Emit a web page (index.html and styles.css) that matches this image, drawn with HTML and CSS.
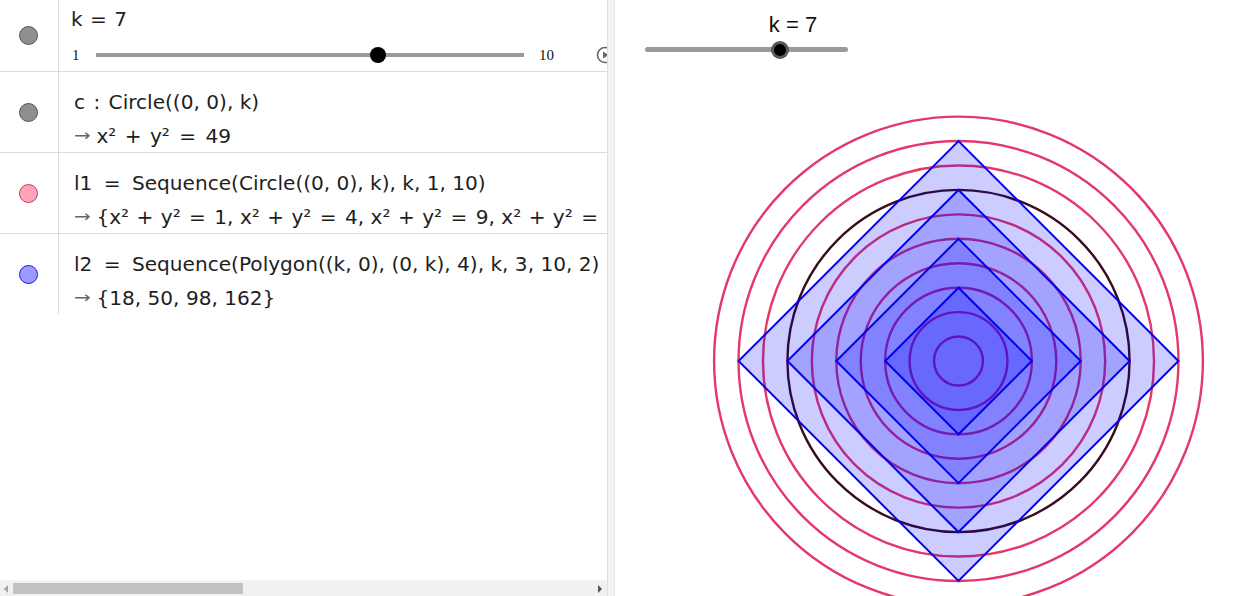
FILE: index.html
```html
<!DOCTYPE html>
<html>
<head>
<meta charset="utf-8">
<link rel="stylesheet" href="styles.css">
</head>
<body>
<div class="app">
  <div class="algebra">
    <div class="rows">
      <div class="row row-slider">
        <div class="marker"><span class="dot dot-gray"></span></div>
        <div class="content content-slider">
          <div class="expr expr-k">k <span class="eq">=</span> 7</div>
          <div class="av-slider">
            <span class="lim lim-min">1</span>
            <span class="track"><span class="knob" style="left: 65.8%"></span></span>
            <span class="lim lim-max">10</span>
            <svg class="play" width="18" height="18" viewBox="0 0 18 18"><circle cx="9" cy="9" r="7.5" fill="none" stroke="#666" stroke-width="1.6"/><path d="M7 5.5 L12.5 9 L7 12.5 Z" fill="#666"/></svg>
          </div>
        </div>
      </div>
      <div class="row">
        <div class="marker"><span class="dot dot-gray"></span></div>
        <div class="content">
          <div class="expr">c <span class="colon">:</span> Circle((0, 0), k)</div>
          <div class="expr expr-out"><span class="arrow">&#8594;</span>x² <span class="op">+</span> y² <span class="eq">=</span> 49</div>
        </div>
      </div>
      <div class="row">
        <div class="marker"><span class="dot dot-pink"></span></div>
        <div class="content">
          <div class="expr">l1 <span class="eq">=</span> Sequence(Circle((0, 0), k), k, 1, 10)</div>
          <div class="expr expr-out expr-long"><span class="arrow">&#8594;</span>{x² <span class="op">+</span> y² <span class="eq">=</span> 1, x² <span class="op">+</span> y² <span class="eq">=</span> 4, x² <span class="op">+</span> y² <span class="eq">=</span> 9, x² <span class="op">+</span> y² <span class="eq">=</span></div>
        </div>
      </div>
      <div class="row row-last">
        <div class="marker"><span class="dot dot-blue"></span></div>
        <div class="content">
          <div class="expr">l2 <span class="eq">=</span> Sequence(Polygon((k, 0), (0, k), 4), k, 3, 10, 2)</div>
          <div class="expr expr-out"><span class="arrow">&#8594;</span>{18, 50, 98, 162}</div>
        </div>
      </div>
    </div>
    <div class="hscroll">
      <span class="arr arr-left"></span>
      <div class="hs-track"><span class="hs-thumb"></span></div>
      <span class="arr arr-right"></span>
    </div>
  </div>
  <div class="divider"></div>
  <div class="graphics">
    <div class="gslider">
      <div class="glabel">k = 7</div>
      <div class="gtrack"><span class="gknob"></span></div>
    </div>
    <svg class="canvas" width="637" height="596" viewBox="0 0 637 596">
      <g fill="none" stroke="#e5386a" stroke-width="2.4">
        <circle cx="343.5" cy="361" r="24.44"/>
        <circle cx="343.5" cy="361" r="48.88"/>
        <circle cx="343.5" cy="361" r="73.32"/>
        <circle cx="343.5" cy="361" r="97.76"/>
        <circle cx="343.5" cy="361" r="122.2"/>
        <circle cx="343.5" cy="361" r="146.64"/>
        <circle cx="343.5" cy="361" r="195.52"/>
        <circle cx="343.5" cy="361" r="219.96"/>
        <circle cx="343.5" cy="361" r="244.4"/>
      </g>
      <circle cx="343.5" cy="361" r="171.08" fill="none" stroke="#3a0c1a" stroke-width="2.4"/>
      <g fill="rgba(0,0,255,0.2)" stroke="#0000f0" stroke-width="2" stroke-linejoin="miter">
        <polygon points="563.46,361 343.5,141.04 123.54,361 343.5,580.96"/>
        <polygon points="514.58,361 343.5,189.92 172.42,361 343.5,532.08"/>
        <polygon points="465.7,361 343.5,238.8 221.3,361 343.5,483.2"/>
        <polygon points="416.82,361 343.5,287.68 270.18,361 343.5,434.32"/>
      </g>
    </svg>
  </div>
</div>
</body>
</html>
```

FILE: styles.css
```css
html, body {
  margin: 0;
  padding: 0;
  background: #fff;
}
body {
  width: 1252px;
  height: 596px;
  overflow: hidden;
}
.app {
  display: flex;
  width: 1252px;
  height: 596px;
}
.algebra {
  width: 607px;
  height: 596px;
  display: flex;
  flex-direction: column;
  overflow: hidden;
  background: #fff;
}
.rows {
  flex: 1;
  display: flex;
  flex-direction: column;
}
.row {
  display: flex;
  height: 80px;
  border-bottom: 1px solid #dcdcdc;
}
.row-slider {
  height: 71px;
}
.row-last {
  border-bottom: none;
}
.marker {
  width: 58px;
  flex: none;
  border-right: 1px solid #dcdcdc;
  display: flex;
  align-items: center;
  justify-content: center;
}
.dot {
  width: 19px;
  height: 19px;
  border-radius: 50%;
  box-sizing: border-box;
  margin-left: -2px;
}
.dot-gray {
  background: #8f8f8f;
  border: 1px solid #555;
}
.dot-pink {
  background: #ffa5b9;
  border: 1px solid #c8386a;
}
.dot-blue {
  background: #9a9aff;
  border: 1px solid #1a1acc;
}
.content {
  flex: 1;
  min-width: 0;
  overflow: hidden;
  white-space: nowrap;
  padding: 14px 0 0 15px;
  display: flex;
  flex-direction: column;
}
.expr {
  font-family: "DejaVu Sans", sans-serif;
  font-size: 20.1px;
  line-height: 33px;
  height: 33px;
  color: #1e1e1e;
}
.eq {
  margin: 0 5px;
}
.op {
  margin: 0 3px;
}
.colon {
  margin: 0 2px;
}
.expr-k .eq {
  margin: 0 1px;
}
.expr-out .eq {
  margin: 0 3px;
}
.expr-out .op {
  margin: 0 2px;
}
.expr-long .eq {
  margin: 0 2px;
}
.expr-long .op {
  margin: 0 1px;
}
.arrow {
  color: #666;
  font-size: 16px;
  display: inline-block;
  transform: scaleX(1.25);
  transform-origin: left center;
  margin-right: 9px;
  vertical-align: 2px;
}
.content-slider {
  padding: 3px 0 0 12px;
}
.av-slider {
  display: flex;
  align-items: center;
  height: 30px;
  margin-top: 4px;
}
.lim {
  font-family: "Liberation Serif", serif;
  font-size: 15px;
  color: #111;
  flex: none;
}
.lim-min {
  width: 24px;
  padding-left: 1px;
}
.track {
  position: relative;
  flex: none;
  width: 428px;
  height: 4px;
  background: #999;
}
.knob {
  position: absolute;
  top: -6px;
  width: 16px;
  height: 16px;
  margin-left: -8px;
  border-radius: 50%;
  background: #000;
}
.lim-max {
  margin-left: 15px;
}
.play {
  margin-left: 42px;
  flex: none;
}
.hscroll {
  height: 15px;
  background: #f1f1f1;
  display: flex;
  align-items: center;
  border-top: 1px solid #f6f6f6;
}
.arr {
  width: 0;
  height: 0;
  border-top: 4px solid transparent;
  border-bottom: 4px solid transparent;
}
.arr-left {
  border-right: 4px solid #a3a3a3;
  margin-left: 4px;
}
.arr-right {
  border-left: 4px solid #505050;
  margin-right: 5px;
}
.hs-track {
  flex: 1;
  height: 11px;
  padding-left: 5px;
}
.hs-thumb {
  display: block;
  width: 230px;
  height: 11px;
  background: #c1c1c1;
}
.divider {
  width: 6px;
  flex: none;
  background: #f3f3f3;
  border-left: 1px solid #dedede;
  border-right: 1px solid #e6e6e6;
}
.graphics {
  flex: 1;
  position: relative;
  overflow: hidden;
  background: #fff;
}
.canvas {
  display: block;
}
.gslider {
  position: absolute;
  left: 28px;
  top: 10px;
  width: 207px;
}
.glabel {
  font-family: "Liberation Sans", sans-serif;
  font-size: 22px;
  color: #111;
  text-align: center;
  padding-left: 94px;
  width: 112px;
  line-height: 30px;
}
.gtrack {
  position: relative;
  margin: 7px 0 0 2px;
  width: 203px;
  height: 5px;
  border-radius: 3px;
  background: #9a9a9a;
}
.gknob {
  position: absolute;
  left: 126px;
  top: -6.5px;
  width: 12px;
  height: 12px;
  border-radius: 50%;
  background: #000;
  border: 3px solid rgba(120,120,120,0.75);
}
```
